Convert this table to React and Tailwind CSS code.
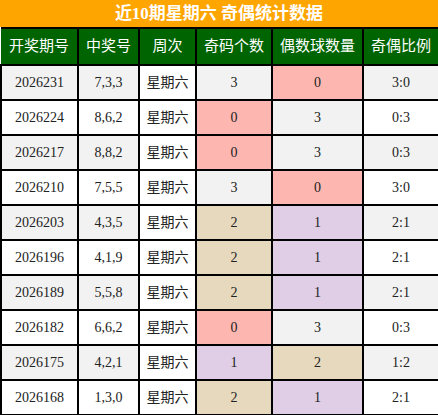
import React from "react";

const rows = [
  ["2026231", "7,3,3", 3, 0, "3:0"],
  ["2026224", "8,6,2", 0, 3, "0:3"],
  ["2026217", "8,8,2", 0, 3, "0:3"],
  ["2026210", "7,5,5", 3, 0, "3:0"],
  ["2026203", "4,3,5", 2, 1, "2:1"],
  ["2026196", "4,1,9", 2, 1, "2:1"],
  ["2026189", "5,5,8", 2, 1, "2:1"],
  ["2026182", "6,6,2", 0, 3, "0:3"],
  ["2026175", "4,2,1", 1, 2, "1:2"],
  ["2026168", "1,3,0", 2, 1, "2:1"],
];

function colorFor(n) {
  if (n === 0) return "bg-[#fdb6b0]";
  if (n === 1) return "bg-[#dfcee6]";
  if (n === 2) return "bg-[#e7d9bd]";
  return "bg-[#f2f2f2]";
}

const font = { fontFamily: '"Liberation Serif", "Noto Sans CJK SC", serif' };

export default function App() {
  const headers = ["开奖期号", "中奖号", "周次", "奇码个数", "偶数球数量", "奇偶比例"];
  return (
    <div className="w-[438px] bg-white" style={font}>
      <div className="h-[27px] bg-[#ffa500] flex items-center justify-center text-white font-bold text-[17px] leading-none">
        近10期星期六 奇偶统计数据
      </div>
      <table className="border-collapse table-fixed w-[438px]">
        <colgroup>
          <col className="w-[77px]" />
          <col className="w-[61px]" />
          <col className="w-[57px]" />
          <col className="w-[76px]" />
          <col className="w-[91px]" />
          <col className="w-[76px]" />
        </colgroup>
        <thead>
          <tr className="bg-[#006400]">
            {headers.map((h, i) => (
              <th
                key={h}
                className={`h-[37px] border-2 border-black ${i === 0 ? "border-l-0" : ""} text-white font-normal text-[15px] text-center p-0`}
              >
                {h}
              </th>
            ))}
          </tr>
        </thead>
        <tbody>
          {rows.map((r, i) => (
            <tr key={r[0]} className={i % 2 === 0 ? "bg-[#f2f2f2]" : "bg-white"}>
              <td className="h-[35px] border-2 border-black text-center text-[14px] text-[#222] p-0">{r[0]}</td>
              <td className="h-[35px] border-2 border-black text-center text-[14px] text-[#222] p-0">{r[1]}</td>
              <td className="h-[35px] border-2 border-black bg-white text-center text-[14px] text-[#222] p-0">星期六</td>
              <td className={`h-[35px] border-2 border-black text-center text-[14px] text-[#222] p-0 ${colorFor(r[2])}`}>{r[2]}</td>
              <td className={`h-[35px] border-2 border-black text-center text-[14px] text-[#222] p-0 ${colorFor(r[3])}`}>{r[3]}</td>
              <td className="h-[35px] border-2 border-black text-center text-[14px] text-[#222] p-0">{r[4]}</td>
            </tr>
          ))}
        </tbody>
      </table>
    </div>
  );
}
